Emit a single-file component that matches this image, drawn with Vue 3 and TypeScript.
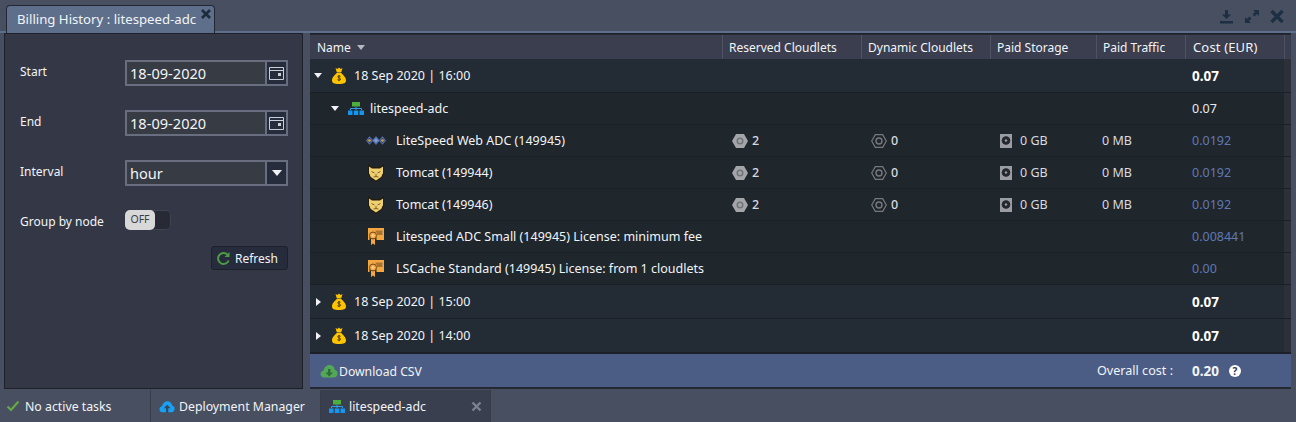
<template>
  <div class="window">
    <div class="tabstrip">
      <div class="tab">
        <span class="tab-title">Billing History : litespeed-adc</span>
        <svg class="tab-close" width="12" height="12" viewBox="0 0 12 12"><path d="M2 2l8 8M10 2l-8 8" stroke="#1d2b3c" stroke-width="2.600" /></svg>
      </div>
      <div class="tools">
        <svg width="15" height="15" viewBox="0 0 15 15"><path d="M6 1h3v4.500h3L7.500 10 3 5.500h3zM1 12h13v2.500H1z" fill="#1d2f42" /></svg>
        <svg width="14" height="15" viewBox="0 0 14 15"><path d="M8 1h6v6l-2-2-2.500 2.500-2-2L10 3zM6 14H0V8l2 2 2.500-2.500 2 2L4 12z" fill="#1d2f42" /></svg>
        <svg width="14" height="15" viewBox="0 0 14 15"><path d="M1.500 2l11 11M12.500 2l-11 11" stroke="#1d2f42" stroke-width="3.400" /></svg>
      </div>
    </div>

    <div class="content">
      <aside class="filters">
        <div class="field">
          <label>Start</label>
          <div class="input"><span class="value">18-09-2020</span><span class="trigger"><svg width="15" height="13" viewBox="0 0 15 13"><path d="M.5.5h14v12H.5zM.5 3.500h14" fill="none" stroke="#c9ced8" /><path d="M9 6h3v3H9z" fill="#c9ced8" /></svg></span></div>
        </div>
        <div class="field">
          <label>End</label>
          <div class="input"><span class="value">18-09-2020</span><span class="trigger"><svg width="15" height="13" viewBox="0 0 15 13"><path d="M.5.5h14v12H.5zM.5 3.500h14" fill="none" stroke="#c9ced8" /><path d="M9 6h3v3H9z" fill="#c9ced8" /></svg></span></div>
        </div>
        <div class="field">
          <label>Interval</label>
          <div class="input"><span class="value">hour</span><span class="trigger"><i class="caret"></i></span></div>
        </div>
        <div class="field group">
          <label>Group by node</label>
          <div class="switch"><span class="knob">OFF</span></div>
        </div>
        <div class="refresh-row">
          <button class="refresh">
            <svg width="15" height="15" viewBox="0 0 15 15"><path d="M12.700 9.500A5.500 5.500 0 1 1 11.500 3.600" fill="none" stroke="#4f9a45" stroke-width="2" /><path d="M13.500 1v5h-5z" fill="#4f9a45" /></svg>
            Refresh
          </button>
        </div>
      </aside>

      <section class="billing">
        <div class="grid-row head">
          <div v-for="c in columns" :key="c" class="head-cell">
            {{ c }}<i v-if="c === 'Name'" class="sort"></i>
          </div>
          <div class="head-cell gutter"></div>
        </div>

        <div
          v-for="(row, i) in rows"
          :key="i"
          class="grid-row"
          :class="row.kind"
        >
          <div class="cell name">
            <i v-if="row.open === true" class="tree-down"></i>
            <i v-else-if="row.open === false" class="tree-right"></i>

            <svg v-if="row.kind === 'hour'" class="ico" width="16" height="17" viewBox="0 0 16 17">
              <path d="M4.500 1l2 1 1.500-1.500L9.500 2l2-1-1.200 4H5.700z" fill="#ffc400" />
              <path d="M6 5.500h4c1 2 5 4 5 8 0 2.500-2 3.500-7 3.500s-7-1-7-3.500c0-4 4-6 5-8z" fill="#ffc400" />
              <path d="M9.500 9.300C8 8.300 6.500 9 6.800 10c.4 1.200 2.700.8 2.800 2.200.1 1-1.800 1.300-3.200.5M8 8v6.200" fill="none" stroke="#3b3000" stroke-width=".9" />
            </svg>

            <svg v-else-if="row.kind === 'env'" class="ico" width="16" height="13" viewBox="0 0 16 13">
              <path d="M4 0h8v4.500H4z" fill="#4caf3c" />
              <path d="M2.500 8V6.500h11V8M8 4.500V8" fill="none" stroke="#2f9fe8" />
              <path d="M0 8.500h4.500V13H0zM5.800 8.500h4.500V13H5.800zM11.500 8.500H16V13h-4.500z" fill="#1296f0" />
            </svg>

            <svg v-else-if="row.icon === 'adc'" class="ico adc" width="20" height="9" viewBox="0 0 20 9">
              <path d="M3.500 1l3 3.500-3 3.500L.7 4.500zM16.500 1l2.800 3.500-2.800 3.500-3-3.500z" fill="#2d3c5c" stroke="#5874b4" stroke-width="1.100" />
              <path d="M10 .6l3.400 3.900L10 8.400 6.600 4.500z" fill="#5f7cba" stroke="#5874b4" stroke-width=".8" />
              <circle cx="3.500" cy="4.500" r="1.300" fill="#d8aa45" />
              <circle cx="10" cy="4.500" r="1.300" fill="#8ea4d4" />
              <circle cx="16.500" cy="4.500" r="1.300" fill="#d8aa45" />
            </svg>

            <svg v-else-if="row.icon === 'tomcat'" class="ico" width="16" height="18" viewBox="0 0 16 18">
              <path d="M0 0l4 3h8l4-3v9l-2 4.500L8 18l-6-4.500L0 9z" fill="#211c0c" />
              <path d="M1 2.500L4 4.500h8l3-2V9l-1.800 4L8 16.500 2.800 13 1 9z" fill="#f0cf70" />
              <path d="M3.500 7.500l3 1.500M12.500 7.500l-3 1.500M8 10v2.500M5.500 13l2.500-.5 2.500.5" stroke="#7d6426" stroke-width="1" fill="none" />
            </svg>

            <svg v-else-if="row.icon === 'license'" class="ico" width="16" height="17" viewBox="0 0 16 17">
              <path d="M0 0h16v12H8.500V9.500h-7V12H0z" fill="#f4a640" />
              <path d="M7.500 2.500h7v4.500H9C9 5 8.500 4 7.500 3.500z" fill="#a87434" />
              <path d="M3 11h4v6l-2-1.500L3 17z" fill="#f4a640" />
              <circle cx="5" cy="7.500" r="3.500" fill="#f4a640" stroke="#6d4a1c" />
              <circle cx="5" cy="7.500" r="1.500" fill="#fbd08a" />
            </svg>

            <span>{{ row.name }}</span>
          </div>

          <template v-if="row.resources">
            <div class="cell metric">
              <svg width="16" height="14" viewBox="0 0 16 14"><path d="M4 0h8l4 7-4 7H4L0 7z" fill="#a3a5a8" /><circle cx="8" cy="7" r="3.500" fill="#707378" /><circle cx="8" cy="7" r="2" fill="#a3a5a8" /></svg>
              <span class="count">{{ row.resources[0] }}</span>
            </div>
            <div class="cell metric">
              <svg width="16" height="14" viewBox="0 0 16 14"><path d="M4.300.6h7.400L15.300 7l-3.600 6.400H4.300L.7 7z" fill="none" stroke="#76797e" stroke-width="1.200" /><circle cx="8" cy="7" r="3" fill="none" stroke="#76797e" stroke-width="1.400" /></svg>
              <span class="count">{{ row.resources[1] }}</span>
            </div>
            <div class="cell metric storage">
              <svg width="12" height="14" viewBox="0 0 12 14"><path d="M0 0h12v14H0z" fill="#9a9da3" /><circle cx="6" cy="6.500" r="4.300" fill="#24282d" /><circle cx="6" cy="6.500" r="1.200" fill="#9a9da3" /></svg>
              <span>{{ row.resources[2] }}</span>
            </div>
            <div class="cell metric plain"><span>{{ row.resources[3] }}</span></div>
          </template>
          <template v-else>
            <div class="cell"></div><div class="cell"></div><div class="cell"></div><div class="cell"></div>
          </template>

          <div class="cell cost">{{ row.cost }}</div>
          <div class="cell rail"></div>
        </div>

        <footer class="summary">
          <div class="csv">
            <svg width="18" height="14" viewBox="0 0 18 14"><path d="M4.500 13.500C2 13.500 .5 12 .5 10c0-1.800 1.300-3 3-3.200C4 3.500 6.500 1 9.500 1c2.800 0 5 2 5.300 4.800 1.700.3 2.800 1.800 2.800 3.600 0 2.400-1.700 4.100-4 4.100z" fill="#53a857" /><path d="M8 5h2.400v3.500H13L9.200 12.500 5.400 8.500H8z" fill="#2c6d3b" /></svg>
            Download CSV
          </div>
          <div class="overall">
            <span>Overall cost :</span>
            <b>0.20</b>
            <i class="help">?</i>
          </div>
        </footer>
      </section>
    </div>

    <nav class="taskbar">
      <div class="task status">
        <svg width="14" height="12" viewBox="0 0 14 12"><path d="M1.500 6.500l3.500 3.500 7.500-8.500" fill="none" stroke="#66a844" stroke-width="2.200" /></svg>
        <span>No active tasks</span>
      </div>
      <div class="task deploy">
        <svg width="16" height="13" viewBox="0 0 18 14"><path d="M4.500 13.500C2 13.500 .5 12 .5 10c0-1.800 1.300-3 3-3.200C4 3.500 6.500 1 9.500 1c2.800 0 5 2 5.300 4.800 1.700.3 2.800 1.800 2.800 3.600 0 2.400-1.700 4.100-4 4.100z" fill="#18a0f5" /><path d="M8 14V9H5.400l3.800-4 3.800 4h-2.600v5z" fill="#3b4458" /></svg>
        <span>Deployment Manager</span>
      </div>
      <div class="task active">
        <svg width="16" height="13" viewBox="0 0 16 13"><path d="M4 0h8v4.500H4z" fill="#4caf3c" /><path d="M2.500 8V6.500h11V8M8 4.500V8" fill="none" stroke="#2f9fe8" /><path d="M0 8.500h4.500V13H0zM5.800 8.500h4.500V13H5.800zM11.500 8.500H16V13h-4.500z" fill="#1296f0" /></svg>
        <span>litespeed-adc</span>
        <svg class="task-close" width="11" height="11" viewBox="0 0 11 11"><path d="M1.500 1.500l8 8M9.500 1.500l-8 8" stroke="#7b8290" stroke-width="2.400" /></svg>
      </div>
    </nav>
  </div>
</template>

<script setup lang="ts">
type Row = {
  kind: 'hour' | 'env' | 'node'
  name: string
  cost: string
  open?: boolean
  icon?: 'adc' | 'tomcat' | 'license'
  resources?: [string, string, string, string]
}

const columns = ['Name', 'Reserved Cloudlets', 'Dynamic Cloudlets', 'Paid Storage', 'Paid Traffic', 'Cost (EUR)']
const usage: [string, string, string, string] = ['2', '0', '0 GB', '0 MB']

const rows: Row[] = [
  { kind: 'hour', name: '18 Sep 2020 | 16:00', cost: '0.07', open: true },
  { kind: 'env', name: 'litespeed-adc', cost: '0.07', open: true },
  { kind: 'node', name: 'LiteSpeed Web ADC (149945)', cost: '0.0192', icon: 'adc', resources: usage },
  { kind: 'node', name: 'Tomcat (149944)', cost: '0.0192', icon: 'tomcat', resources: usage },
  { kind: 'node', name: 'Tomcat (149946)', cost: '0.0192', icon: 'tomcat', resources: usage },
  { kind: 'node', name: 'Litespeed ADC Small (149945) License: minimum fee', cost: '0.008441', icon: 'license' },
  { kind: 'node', name: 'LSCache Standard (149945) License: from 1 cloudlets', cost: '0.00', icon: 'license' },
  { kind: 'hour', name: '18 Sep 2020 | 15:00', cost: '0.07', open: false },
  { kind: 'hour', name: '18 Sep 2020 | 14:00', cost: '0.07', open: false },
]
</script>

<style>
html,
body {
  margin: 0;
  background: #474f61;
}
</style>

<style scoped>
.window {
  width: 1296px;
  height: 422px;
  display: flex;
  flex-direction: column;
  overflow: hidden;
  background: #474f61;
  color: #f2f4f7;
  font-family: "Noto Sans", "DejaVu Sans", sans-serif;
  font-size: 12px;
}

/* top tabs */
.tabstrip {
  height: 33px;
  box-sizing: border-box;
  flex: none;
  display: flex;
  justify-content: space-between;
  padding: 5px 12px 0 6px;
  border-bottom: 2px solid #5e6f8b;
}

.tab {
  width: 209px;
  box-sizing: border-box;
  height: 28px;
  display: flex;
  padding: 0 2px 0 10px;
  justify-content: space-between;
  background: #5e6f8b;
  border: 1px solid #232733;
  border-bottom: 0;
  border-radius: 4px 4px 0 0;
}

.tab-title {
  font-size: 13.200px;
  line-height: 26px;
  white-space: nowrap;
}

.tab-close {
  margin-top: 2px;
}

.tools {
  display: flex;
  gap: 11px;
  padding-top: 4px;
}

/* main area */
.content {
  height: 356px;
  flex: none;
  display: flex;
  gap: 7px;
  padding: 0 5px 0 4px;
}

.filters {
  width: 299px;
  flex: none;
  box-sizing: border-box;
  padding: 26px 14px 0 15px;
  background: #343846;
  border: 1px solid #1e2129;
}

.field {
  display: flex;
  height: 26px;
  margin-bottom: 24px;
}

.field label {
  width: 105px;
  flex: none;
  line-height: 24px;
}

.input {
  width: 163px;
  height: 26px;
  flex: none;
  box-sizing: border-box;
  display: flex;
  border: 2px solid #686e80;
  background: #373b43;
}

.value {
  flex: 1;
  padding-left: 3px;
  font-size: 14.600px;
  line-height: 23px;
}

.trigger {
  width: 19px;
  display: flex;
  align-items: center;
  justify-content: center;
  background: #272c3d;
  border-left: 2px solid #686e80;
}

.caret {
  border-left: 5.500px solid transparent;
  border-right: 5.500px solid transparent;
  border-top: 6px solid #f0f2f5;
}

.group {
  height: 20px;
  margin-bottom: 16px;
}

.group label {
  line-height: 24px;
}

.switch {
  width: 46px;
  height: 20px;
  border-radius: 5px;
  background: #272a34;
  box-shadow: inset 0 0 0 1px #3f4352;
}

.knob {
  display: block;
  width: 30px;
  height: 20px;
  border-radius: 5px;
  background: #d8d8d8;
  color: #3a3d45;
  font-size: 10.500px;
  line-height: 19px;
  text-align: center;
}

.refresh-row {
  display: flex;
  justify-content: flex-end;
}

.refresh {
  width: 77px;
  height: 24px;
  display: flex;
  align-items: center;
  gap: 4px;
  padding: 0 0 0 4px;
  background: #272c3d;
  border: 1px solid #1e2129;
  border-radius: 3px;
  color: #f2f4f7;
  font: inherit;
}

.billing {
  width: 981px;
  flex: none;
  display: flex;
  flex-direction: column;
  background: #262a33;
  border-top: 1px solid #1e2129;
}

.grid-row {
  flex: none;
  box-sizing: border-box;
  display: grid;
  grid-template-columns: 412px 139px 129px 106px 89px 99px 7px;
  height: 32px;
  border-bottom: 1px solid #1a2025;
  background: #1f262c;
  font-size: 12.500px;
}

.head {
  height: 24px;
  margin-top: 1px;
  background: #3a3e4f;
  border-bottom: 0;
  font-size: 12px;
}

.head-cell {
  display: flex;
  align-items: center;
  padding-left: 6px;
  border-left: 1px solid #4e5264;
  white-space: nowrap;
}

.head-cell:first-child {
  padding-left: 7px;
  border-left: 0;
}

.head-cell:nth-child(6) {
  padding-left: 7px;
  font-size: 13px;
  letter-spacing: 0.15px;
}

.sort {
  margin-left: 6px;
  border-left: 4.500px solid transparent;
  border-right: 4.500px solid transparent;
  border-top: 5px solid #b5b8c2;
}

.hour {
  height: 34px;
  background: #232b35;
}

.rail {
  background: #2b3039;
}

.cell {
  display: flex;
  align-items: center;
  white-space: nowrap;
}

.name {
  position: relative;
  padding-left: 58px;
  gap: 8px;
}

.name .ico {
  position: absolute;
  left: 58px;
}

.name .ico.adc {
  left: 56px;
}

.name > span {
  margin-left: 28px;
}

.hour .name .ico {
  left: 21px;
}

.hour .name > span {
  margin-left: -14px;
}

.env .name .ico {
  left: 38px;
}

.env .name > span {
  margin-left: 2px;
}

.tree-down,
.tree-right {
  position: absolute;
  left: 4px;
  width: 0;
  height: 0;
}

.tree-down {
  border-left: 4px solid transparent;
  border-right: 4px solid transparent;
  border-top: 5px solid #f0f2f5;
}

.tree-right {
  left: 6px;
  border-top: 4px solid transparent;
  border-bottom: 4px solid transparent;
  border-left: 5px solid #f0f2f5;
}

.env .tree-down {
  left: 21px;
}

.metric {
  gap: 4px;
  padding-left: 10px;
  color: #d8dbe0;
}

.count {
  font-size: 12.500px;
  font-weight: 500;
}

.metric.storage {
  gap: 8px;
  padding-left: 10px;
}

.metric.plain {
  padding-left: 6px;
}

.cost {
  padding-left: 7px;
  color: #e8eaee;
}

.node .cost {
  color: #6079b4;
}

.hour .cost {
  font-size: 13.500px;
  font-weight: 700;
  color: #fff;
}

.summary {
  height: 35px;
  flex: none;
  box-sizing: border-box;
  display: flex;
  justify-content: space-between;
  align-items: center;
  padding: 0 50px 0 10px;
  background: #4b5d84;
  border-top: 1px solid #1e2129;
  border-bottom: 1px solid #232733;
}

.csv {
  display: flex;
  align-items: center;
  gap: 1px;
  font-size: 12.200px;
  padding-top: 1px;
}

.overall {
  display: flex;
  align-items: center;
  font-size: 12.600px;
}

.overall b {
  margin-left: 19px;
  font-size: 13.500px;
}

.help {
  width: 12px;
  height: 12px;
  margin-left: 10px;
  border-radius: 50%;
  background: #fff;
  color: #2b3550;
  font-size: 10px;
  font-style: normal;
  font-weight: 700;
  line-height: 12px;
  text-align: center;
}

/* bottom bar */
.taskbar {
  flex: none;
  height: 32px;
  margin-top: 1px;
  display: flex;
  font-size: 12.300px;
}

.task {
  box-sizing: border-box;
  display: flex;
  align-items: center;
  gap: 4px;
  border-right: 1px solid #373c4b;
}

.status {
  width: 151px;
  padding-left: 6px;
  gap: 5px;
}

.deploy {
  width: 170px;
  padding-left: 8px;
}

.active {
  width: 170px;
  padding-left: 8px;
  position: relative;
  background: #3a3f4f;
}

.task-close {
  position: absolute;
  right: 8px;
  top: 11px;
}
</style>
